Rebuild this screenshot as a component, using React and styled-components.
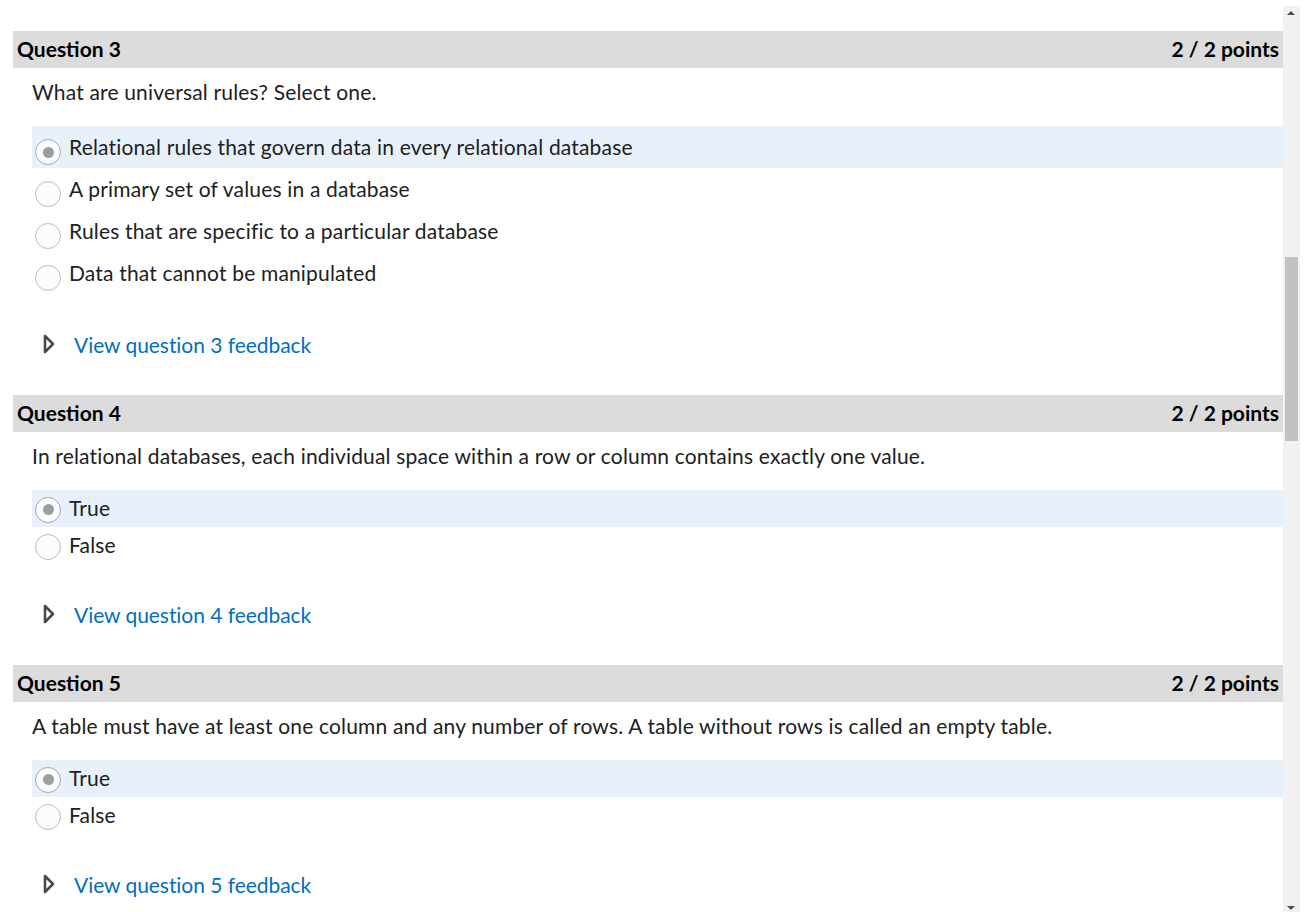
import React from 'react';
import styled, { createGlobalStyle } from 'styled-components';

const GlobalStyle = createGlobalStyle`
  html, body {
    margin: 0;
    padding: 0;
    background: #ffffff;
    overflow: hidden;
  }
  body {
    font-family: Lato, "Noto Sans", "Liberation Sans", sans-serif;
    color: #202122;
  }
`;

const Frame = styled.div`
  display: flex;
  height: 906px;
  padding-top: 6px;
  overflow: hidden;
`;

const Content = styled.div`
  width: 1270px;
  margin-left: 13px;
  padding-top: 25px;
`;

const QuestionBlock = styled.section`
  margin-bottom: 36px;
`;

const QuestionHeader = styled.div`
  display: flex;
  justify-content: space-between;
  align-items: center;
  height: 37px;
  padding: 0 4px 3px;
  box-sizing: border-box;
  background: #dcdcdc;
  font-size: 21px;
  font-weight: 700;
  color: #000;
`;

const Prompt = styled.p`
  margin: 9px 0 19px 19px;
  font-size: 21px;
  line-height: 30px;
  letter-spacing: 0.17px;
  color: #202122;
`;

const Options = styled.div`
  margin-left: 19px;
`;

const OptionRow = styled.label`
  display: flex;
  align-items: center;
  height: ${p => p.$height}px;
  background: ${p => (p.$selected ? '#e8f1fb' : 'transparent')};
  font-size: 21px;
  letter-spacing: 0.17px;
  color: #202122;
`;

const OptionText = styled.span`
  margin-bottom: 2px;
`;

const Radio = styled.span`
  box-sizing: border-box;
  width: 26px;
  height: 26px;
  margin: ${p => p.$offset}px 8px 0 3px;
  border-radius: 50%;
  border: 1.5px solid ${p => (p.$checked ? '#a4a7aa' : '#bbbec1')};
  background: #fbfcfd;
  display: flex;
  align-items: center;
  justify-content: center;
  flex-shrink: 0;

  &::after {
    content: '';
    width: 11px;
    height: 11px;
    border-radius: 50%;
    background: ${p => (p.$checked ? '#9a9da1' : 'transparent')};
  }
`;

const Feedback = styled.div`
  display: flex;
  align-items: center;
  height: 30px;
  margin: 35px 0 0 29px;
`;

const FeedbackLink = styled.a`
  margin-left: 18px;
  font-size: 21px;
  letter-spacing: -0.05px;
  color: #006fbf;
  text-decoration: none;
  cursor: pointer;
`;

const ScrollTrack = styled.div`
  position: relative;
  width: 17px;
  height: 906px;
  background: #f1f1f1;
  flex-shrink: 0;
`;

const ScrollThumb = styled.div`
  position: absolute;
  left: 2px;
  top: 251px;
  width: 13px;
  height: 184px;
  background: #c1c1c1;
`;

const Arrow = styled.div`
  position: absolute;
  left: 4px;
  ${p => (p.$down ? 'bottom: 2px;' : 'top: 5px;')}
  width: 0;
  height: 0;
  border-left: 4px solid transparent;
  border-right: 4px solid transparent;
  ${p => (p.$down ? 'border-top: 4px solid #505050;' : 'border-bottom: 4px solid #505050;')}
`;

const Caret = () => (
  <svg width="14" height="22" viewBox="0 0 14 22">
    <path d="M3 3 L11 11 L3 19 Z" fill="none" stroke="#4a4a4a" strokeWidth="2.6" strokeLinejoin="round" />
  </svg>
);

const questions = [
  {
    n: 3,
    prompt: 'What are universal rules? Select one.',
    rowHeight: 42,
    offset: 10,
    options: [
      'Relational rules that govern data in every relational database',
      'A primary set of values in a database',
      'Rules that are specific to a particular database',
      'Data that cannot be manipulated',
    ],
  },
  {
    n: 4,
    prompt: 'In relational databases, each individual space within a row or column contains exactly one value.',
    rowHeight: 37,
    offset: 2,
    options: ['True', 'False'],
  },
  {
    n: 5,
    prompt: 'A table must have at least one column and any number of rows. A table without rows is called an empty table.',
    rowHeight: 37,
    offset: 2,
    options: ['True', 'False'],
  },
];

export default function App() {
  return (
    <>
      <GlobalStyle />
      <Frame>
        <Content>
          {questions.map(q => (
            <QuestionBlock key={q.n}>
              <QuestionHeader>
                <span>Question {q.n}</span>
                <span>2 / 2 points</span>
              </QuestionHeader>
              <Prompt>{q.prompt}</Prompt>
              <Options>
                {q.options.map((o, i) => (
                  <OptionRow key={o} $height={q.rowHeight} $selected={i === 0}>
                    <Radio $checked={i === 0} $offset={q.offset} />
                    <OptionText>{o}</OptionText>
                  </OptionRow>
                ))}
              </Options>
              <Feedback>
                <Caret />
                <FeedbackLink>View question {q.n} feedback</FeedbackLink>
              </Feedback>
            </QuestionBlock>
          ))}
        </Content>
        <ScrollTrack>
          <Arrow />
          <ScrollThumb />
          <Arrow $down />
        </ScrollTrack>
      </Frame>
    </>
  );
}
